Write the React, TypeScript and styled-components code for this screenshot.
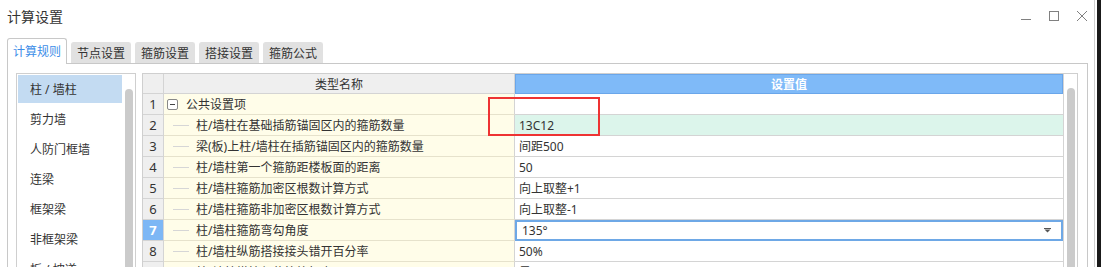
import React from "react";
import styled, { createGlobalStyle } from "styled-components";

const GlobalStyle = createGlobalStyle`
  html, body {
    margin: 0;
    padding: 0;
    background: #fff;
  }
  body {
    font-family: "Noto Sans", "Noto Sans CJK SC", sans-serif;
    font-size: 12px;
    color: #333;
  }
`;

const Window = styled.div`
  position: relative;
  width: 1101px;
  height: 267px;
  overflow: hidden;
  box-sizing: border-box;
  display: flex;
  flex-direction: column;
  border-right: 4px solid #1a1a1a;
`;

const EdgeLine = styled.div`
  position: absolute;
  top: 0;
  right: 2px;
  width: 1px;
  height: 100%;
  background: #d0d0d0;
`;

const TitleBar = styled.div`
  height: 37px;
  flex-shrink: 0;
  display: flex;
  justify-content: space-between;
  align-items: flex-start;
  padding-left: 7px;
  box-sizing: border-box;
`;

const Title = styled.div`
  font-size: 14px;
  line-height: 16px;
  margin-top: 9px;
  color: #333;
`;

const Controls = styled.div`
  display: flex;
  gap: 18px;
  margin-top: 11px;
  margin-right: 10px;
`;

const CtrlIcon = styled.svg`
  width: 10px;
  height: 10px;
  display: block;
`;

const TabBar = styled.div`
  display: flex;
  flex-shrink: 0;
  align-items: flex-end;
  gap: 4px;
  margin-left: 7px;
  height: 26px;
  position: relative;
  z-index: 1;
`;

const Tab = styled.div<{ $active?: boolean }>`
  box-sizing: border-box;
  height: ${(p) => (p.$active ? "26px" : "21px")};
  padding: 0 ${(p) => (p.$active ? "5px" : "5px")};
  display: flex;
  align-items: center;
  border-radius: 3px 3px 0 0;
  background: ${(p) => (p.$active ? "#fff" : "#e1e1e1")};
  border: 1px solid ${(p) => (p.$active ? "#c8c8c8" : "#e1e1e1")};
  border-bottom: none;
  color: ${(p) => (p.$active ? "#3d8ee8" : "#333")};
  font-size: 12px;
  margin-bottom: ${(p) => (p.$active ? "-1px" : "0")};
  padding-bottom: ${(p) => (p.$active ? "1px" : "0")};
`;

const Panel = styled.div`
  margin-left: 7px;
  width: 1081px;
  flex: 1;
  min-height: 0;
  overflow: hidden;
  box-sizing: border-box;
  border: 1px solid #c8c8c8;
  border-bottom: none;
  display: flex;
  gap: 6px;
  padding: 9px 0 0 8px;
`;

const SideList = styled.div`
  width: 120px;
  flex-shrink: 0;
  box-sizing: border-box;
  border: 1px solid #cfcfcf;
  border-bottom: none;
  display: flex;
  padding: 1px 2px 0 1px;
`;

const Items = styled.div`
  width: 104px;
  display: flex;
  flex-direction: column;
`;

const Item = styled.div<{ $selected?: boolean }>`
  height: 28px;
  margin-bottom: 2px;
  flex-shrink: 0;
  display: flex;
  align-items: center;
  padding-left: 12px;
  background: ${(p) => (p.$selected ? "#c3dbf2" : "transparent")};
  color: #333;
  white-space: nowrap;
`;

const Track = styled.div`
  flex: 1;
  display: flex;
  justify-content: flex-end;
  padding-top: 14px;
`;

const Thumb = styled.div`
  width: 8px;
  height: 400px;
  border-radius: 4px;
  background: #cbcbcb;
`;

const TableBox = styled.div`
  width: 936px;
  flex-shrink: 0;
  box-sizing: border-box;
  border: 1px solid #cfcfcf;
  border-bottom: none;
  display: flex;
`;

const Grid = styled.div`
  width: 920px;
  display: grid;
  grid-template-columns: 21px 351px 1fr;
  grid-template-rows: 20px;
  grid-auto-rows: 21px;
  align-content: start;
`;

const HeadCell = styled.div<{ $blue?: boolean }>`
  box-sizing: border-box;
  display: flex;
  align-items: center;
  justify-content: center;
  background: ${(p) => (p.$blue ? "#7fbaf8" : "#efefef")};
  color: ${(p) => (p.$blue ? "#fff" : "#333")};
  font-weight: ${(p) => (p.$blue ? 700 : 400)};
  border-right: 1px solid ${(p) => (p.$blue ? "#6aa6ea" : "#d4d4d4")};
  border-bottom: 1px solid ${(p) => (p.$blue ? "#6aa6ea" : "#d4d4d4")};
  border-top: ${(p) => (p.$blue ? "1px solid #6aa6ea" : "none")};
  border-left: ${(p) => (p.$blue ? "1px solid #6aa6ea" : "none")};
`;

const NumCell = styled.div<{ $active?: boolean }>`
  box-sizing: border-box;
  display: flex;
  align-items: center;
  justify-content: center;
  font-size: 13px;
  background: ${(p) => (p.$active ? "#7db7f5" : "#efefef")};
  color: ${(p) => (p.$active ? "#fff" : "#333")};
  font-weight: ${(p) => (p.$active ? 700 : 400)};
  border-right: 1px solid #d4d4d4;
  border-bottom: 1px solid #d4d4d4;
`;

const NameCell = styled.div`
  box-sizing: border-box;
  display: flex;
  align-items: center;
  background: #fffde9;
  border-right: 1px solid #d4d4d4;
  border-bottom: 1px solid #e6e2cc;
  white-space: nowrap;
`;

const TreeLine = styled.span`
  width: 16px;
  height: 1px;
  background: #d6d6d6;
  margin-left: 9px;
  margin-right: 7px;
`;

const TreeBox = styled.span`
  width: 11px;
  height: 11px;
  box-sizing: border-box;
  border: 1px solid #888;
  border-radius: 2px;
  margin-left: 3px;
  margin-right: 8px;
  display: flex;
  align-items: center;
  justify-content: center;
  background: #fff;
  &::after {
    content: "";
    width: 5px;
    height: 1px;
    background: #444;
  }
`;

const ValueCell = styled.div<{ $tone?: "green" | "edit" }>`
  box-sizing: border-box;
  display: flex;
  align-items: center;
  justify-content: space-between;
  padding: ${(p) => (p.$tone === "edit" ? "0 10px 0 5px" : "0 0 0 4px")};
  background: ${(p) => (p.$tone === "green" ? "#dcf5eb" : "#fff")};
  border: ${(p) => (p.$tone === "edit" ? "2px solid #6ea8e6" : "none")};
  border-bottom: ${(p) => (p.$tone === "edit" ? "2px solid #6ea8e6" : "1px solid #d4d4d4")};
  white-space: nowrap;
`;

const ScrollArea = styled.div`
  flex: 1;
  border-left: 1px solid #d4d4d4;
  display: flex;
  justify-content: center;
  padding-top: 14px;
`;

const RedBox = styled.div`
  position: absolute;
  left: 488px;
  top: 97px;
  width: 112px;
  height: 39px;
  box-sizing: border-box;
  border: 2px solid #ee3333;
  pointer-events: none;
`;

const tabs = ["计算规则", "节点设置", "箍筋设置", "搭接设置", "箍筋公式"];
const sideItems = ["柱 / 墙柱", "剪力墙", "人防门框墙", "连梁", "框架梁", "非框架梁", "板 / 坡道"];

type Row = { name: string; value: string; group?: boolean };
const rows: Row[] = [
  { name: "公共设置项", value: "", group: true },
  { name: "柱/墙柱在基础插筋锚固区内的箍筋数量", value: "13C12" },
  { name: "梁(板)上柱/墙柱在插筋锚固区内的箍筋数量", value: "间距500" },
  { name: "柱/墙柱第一个箍筋距楼板面的距离", value: "50" },
  { name: "柱/墙柱箍筋加密区根数计算方式", value: "向上取整+1" },
  { name: "柱/墙柱箍筋非加密区根数计算方式", value: "向上取整-1" },
  { name: "柱/墙柱箍筋弯勾角度", value: "135°" },
  { name: "柱/墙柱纵筋搭接接头错开百分率", value: "50%" },
  { name: "柱/墙柱搭接部位箍筋加密", value: "是" },
];

const DropArrow = () => (
  <svg width="7" height="5" viewBox="0 0 7 5">
    <rect x="0" y="0" width="7" height="1" fill="#555" />
    <path d="M0.5 1.5 H6.5 L3.5 4.5 Z" fill="#555" />
  </svg>
);

export default function App() {
  return (
    <>
      <GlobalStyle />
      <Window>
        <TitleBar>
          <Title>计算设置</Title>
          <Controls>
            <CtrlIcon viewBox="0 0 10 10">
              <path d="M0 8.5 H10" stroke="#808080" strokeWidth="1" />
            </CtrlIcon>
            <CtrlIcon viewBox="0 0 10 10">
              <rect x="0.5" y="0.5" width="9" height="9" fill="none" stroke="#808080" strokeWidth="1" />
            </CtrlIcon>
            <CtrlIcon viewBox="0 0 10 10">
              <path d="M0 0 L10 10 M10 0 L0 10" stroke="#808080" strokeWidth="1" />
            </CtrlIcon>
          </Controls>
        </TitleBar>
        <TabBar>
          {tabs.map((t, i) => (
            <Tab key={t} $active={i === 0}>
              {t}
            </Tab>
          ))}
        </TabBar>
        <Panel>
          <SideList>
            <Items>
              {sideItems.map((s, i) => (
                <Item key={s} $selected={i === 0}>
                  {s}
                </Item>
              ))}
            </Items>
            <Track>
              <Thumb />
            </Track>
          </SideList>
          <TableBox>
            <Grid>
              <HeadCell />
              <HeadCell>类型名称</HeadCell>
              <HeadCell $blue>设置值</HeadCell>
              {rows.map((r, i) => (
                <React.Fragment key={i}>
                  <NumCell $active={i === 6}>{i + 1}</NumCell>
                  <NameCell>
                    {r.group ? <TreeBox /> : <TreeLine />}
                    {r.name}
                  </NameCell>
                  <ValueCell $tone={i === 1 ? "green" : i === 6 ? "edit" : undefined}>
                    <span>{r.value}</span>
                    {i === 6 && <DropArrow />}
                  </ValueCell>
                </React.Fragment>
              ))}
            </Grid>
            <ScrollArea>
              <Thumb />
            </ScrollArea>
          </TableBox>
        </Panel>
        <RedBox />
        <EdgeLine />
      </Window>
    </>
  );
}
